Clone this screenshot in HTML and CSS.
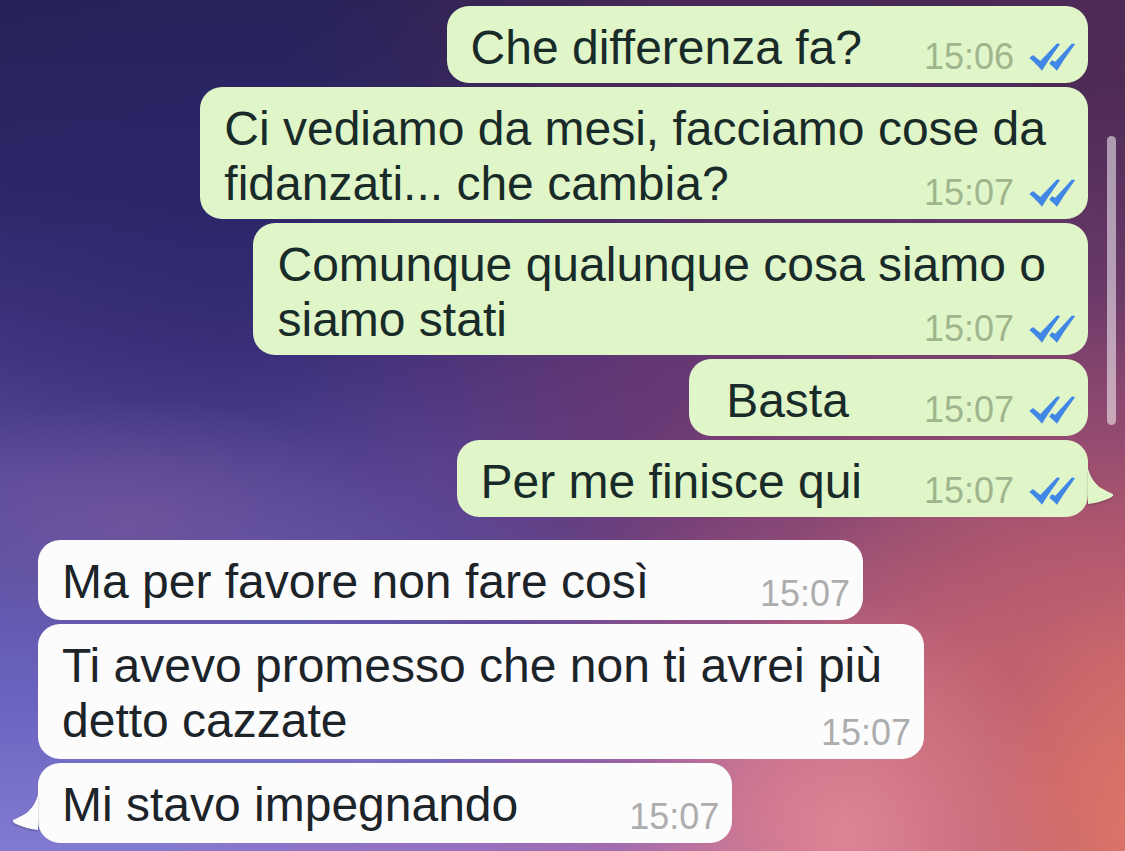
FILE: index.html
```html
<!DOCTYPE html>
<html lang="it">
<head>
<meta charset="utf-8">
<meta name="viewport" content="width=device-width, initial-scale=1">
<title>Chat</title>
<link rel="stylesheet" href="styles.css">
</head>
<body>
<svg class="sprite" aria-hidden="true">
  <symbol id="read" viewBox="0 0 138 84">
    <path d="M1 45 12 36 34 54 83 2Q88 0 93 4L58 53 39 83Q18 59 1 45Z"/>
    <path d="M68 52 79 56 128 2Q133 0 138 4L103 53 84 83Q71 70 61 62Z"/>
  </symbol>
</svg>
<main class="chat">
  <section class="group group-out">
    <article class="bubble single">
      <p class="text">Che differenza fa?</p>
      <footer class="meta"><time>15:06</time><svg class="ticks" role="img" aria-label="Letto"><use href="#read"/></svg></footer>
    </article>
    <article class="bubble">
      <p class="text">Ci vediamo da mesi, facciamo cose da<br>fidanzati... che cambia?</p>
      <footer class="meta"><time>15:07</time><svg class="ticks" role="img" aria-label="Letto"><use href="#read"/></svg></footer>
    </article>
    <article class="bubble">
      <p class="text">Comunque qualunque cosa siamo o<br>siamo stati</p>
      <footer class="meta"><time>15:07</time><svg class="ticks" role="img" aria-label="Letto"><use href="#read"/></svg></footer>
    </article>
    <article class="bubble single brief">
      <p class="text">Basta</p>
      <footer class="meta"><time>15:07</time><svg class="ticks" role="img" aria-label="Letto"><use href="#read"/></svg></footer>
    </article>
    <article class="bubble single">
      <p class="text">Per me finisce qui</p>
      <footer class="meta"><time>15:07</time><svg class="ticks" role="img" aria-label="Letto"><use href="#read"/></svg></footer>
      <svg class="tail" viewBox="0 0 26 36" aria-hidden="true"><path d="M0 0C3 9 7 15 13 19Q20 23 25 25Q26 27 22 29Q11 34 0 35Z"/></svg>
    </article>
  </section>
  <section class="group group-in">
    <article class="bubble single">
      <p class="text">Ma per favore non fare così</p>
      <footer class="meta"><time>15:07</time></footer>
    </article>
    <article class="bubble">
      <p class="text">Ti avevo promesso che non ti avrei più<br>detto cazzate</p>
      <footer class="meta"><time>15:07</time></footer>
    </article>
    <article class="bubble single">
      <p class="text">Mi stavo impegnando</p>
      <footer class="meta"><time>15:07</time></footer>
      <svg class="tail" viewBox="0 0 26 36" aria-hidden="true"><path d="M26 0C23 9 19 15 13 19Q6 23 1 25Q0 27 4 29Q15 34 26 35Z"/></svg>
    </article>
  </section>
  <div class="scrollbar" aria-hidden="true"></div>
</main>
</body>
</html>
```
FILE: styles.css
```css
* { box-sizing: border-box; }

body {
  margin: 0;
  font-family: "Liberation Sans", Arial, sans-serif;
}

.sprite {
  position: absolute;
  width: 0;
  height: 0;
}

.chat {
  position: relative;
  display: flex;
  flex-direction: column;
  gap: 23px;
  min-height: 100vh;
  padding: 6px 37px 8px 38px;
  overflow: hidden;
  background:
    radial-gradient(ellipse 16% 30% at 103% 97%, #e07864 0%, #e0786400 100%),
    radial-gradient(ellipse 20% 28% at 75% 98%, #dd8494 0%, #dd849400 100%),
    radial-gradient(ellipse 34% 40% at 94% 92%, #c5626d 0%, #c5626de0 40%, #c5626d00 100%),
    radial-gradient(ellipse 30% 34% at 68% 94%, #c96a98cc 0%, #c96a9800 100%),
    radial-gradient(ellipse 26% 16% at 38% 103%, #a468b4aa 0%, #a468b400 100%),
    radial-gradient(ellipse 24% 14% at 12% 61%, #79579baa 0%, #79579b00 100%),
    radial-gradient(ellipse 50% 34% at 100% 68%, #a9536f 0%, #a9536f00 100%),
    radial-gradient(ellipse 60% 44% at 100% 54%, #864672dd 0%, #86467200 100%),
    radial-gradient(ellipse 42% 58% at 66% 54%, #633374dd 0%, #63337400 100%),
    radial-gradient(ellipse 75% 80% at 100% 8%, #4f2b56 0%, #4f2b56cc 45%, #4f2b5600 100%),
    radial-gradient(ellipse 26% 34% at 60% 0%, #47204a99 0%, #47204a00 100%),
    radial-gradient(ellipse 28% 40% at 20% 26%, #2a246899 0%, #2a246800 100%),
    linear-gradient(to bottom, #252257 0%, #2d2868 22%, #443784 42%, #554798 54%, #5c53a6 66%, #6b64bf 82%, #827bd2 100%);
}

.group {
  display: flex;
  flex-direction: column;
  gap: 4px;
}

.group-out {
  align-items: flex-end;
  --bubble: #e0f6c9;
  --ink: #192b29;
  --stamp: #a0b58e;
}

.group-in {
  align-items: flex-start;
  --bubble: #fcfcfc;
  --ink: #1d2429;
  --stamp: #adadad;
}

.bubble {
  position: relative;
  display: grid;
  max-width: 100%;
  border-radius: 22px;
  background: var(--bubble);
}

.text,
.meta { grid-area: 1 / 1; }

.text {
  margin: 0;
  padding: 14px 42px 8px 24px;
  color: var(--ink);
  font-size: 48px;
  line-height: 55px;
}

.group-in .text { padding-bottom: 11px; }

.group-out .single .text { padding-right: 226px; }

.group-in .single .text { padding-right: 214px; }

.brief { min-width: 399px; }

.brief .text { text-align: center; }

.meta {
  display: flex;
  align-items: flex-end;
  align-self: end;
  justify-self: end;
  gap: 15px;
  padding: 0 13px 6px 0;
  color: var(--stamp);
  font-size: 36px;
  line-height: 40px;
}

.ticks {
  width: 46px;
  height: 28px;
  margin-bottom: 6px;
  fill: #4187e6;
}

.tail {
  position: absolute;
  bottom: 12px;
  width: 26px;
  height: 36px;
  fill: var(--bubble);
  filter: drop-shadow(0 1px 1px #0004);
}

.group-out .tail { left: 100%; }

.group-in .tail { right: 100%; }

.scrollbar {
  position: absolute;
  top: 16%;
  right: 9px;
  width: 9px;
  height: 34%;
  border-radius: 5px;
  background: #ffffff85;
}
```
